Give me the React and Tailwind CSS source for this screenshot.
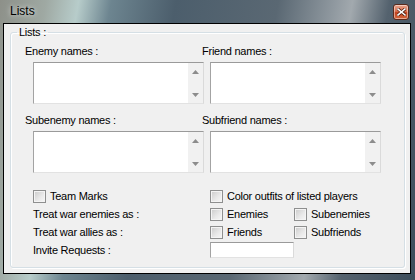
import React from 'react';

const frameBg =
  'bg-[linear-gradient(100deg,#8d9089_0%,#9fa9a3_10%,#b7ccca_17%,#6d8590_24%,#4c5e6c_38%,#5a6873_60%,#8f989f_72%,#a2a9ae_76%,#54626e_84%,#3d4d5b_100%)]';

const Arrow = ({ up }) => (
  <svg width="7" height="4" viewBox="0 0 7 4" aria-hidden="true">
    <path d={up ? 'M3.5 0 L7 4 L0 4 Z' : 'M0 0 L7 0 L3.5 4 Z'} fill="#8c8c8c" />
  </svg>
);

// list box with a disabled vertical scrollbar
const ListBox = () => (
  <div className="ml-[8px] flex h-[42px] w-[171px] border border-t-[#9a9a9a] border-l-[#a3a3a3] border-r-[#dadada] border-b-[#e2e2e2] bg-white">
    <div className="flex-1" />
    <div className="flex w-[16px] flex-col justify-between border-l border-l-white bg-[#f1f1f1]">
      <div className="flex h-[17px] items-center justify-center">
        <Arrow up />
      </div>
      <div className="flex h-[17px] items-center justify-center">
        <Arrow />
      </div>
    </div>
  </div>
);

const Check = ({ label }) => (
  <label className="flex items-center gap-[4px]">
    <span className="h-[13px] w-[13px] border border-[#8e8f8f] bg-[#f4f4f4] p-[1px]">
      <span className="block h-full w-full bg-[linear-gradient(135deg,#cfcfcf,#e9e9e9_60%,#f4f4f4)]" />
    </span>
    <span>{label}</span>
  </label>
);

const CloseButton = () => (
  <button
    type="button"
    className="flex h-[16px] w-[16px] items-center justify-center rounded-[3px] border border-[#5b2a1c] bg-[linear-gradient(180deg,#e9a48c_0%,#d9704f_45%,#c0401c_55%,#d4683e_100%)] shadow-[inset_0_0_0_1px_rgba(255,255,255,0.45)]"
  >
    <svg width="9" height="8" viewBox="0 0 9 8" aria-hidden="true">
      <path
        d="M1 1 L8 7 M8 1 L1 7"
        stroke="#4a1a0c"
        strokeWidth="3"
        strokeLinecap="square"
      />
      <path
        d="M1 1 L8 7 M8 1 L1 7"
        stroke="#ffffff"
        strokeWidth="1.6"
        strokeLinecap="square"
      />
    </svg>
  </button>
);

export default function App() {
  return (
    <div
      className={`flex h-[280px] w-[415px] flex-col ${frameBg} font-['Liberation_Sans',Arial,sans-serif] text-[11px] leading-[13px] tracking-[-0.25px] text-black`}
    >
      {/* Title bar */}
      <div className="flex h-[23px] items-center justify-between pl-[10px] pr-[6px]">
        <span className="text-[12px] tracking-normal [text-shadow:0_0_5px_rgba(255,255,255,0.9)]">Lists</span>
        <CloseButton />
      </div>

      {/* Client area */}
      <div className="ml-[3px] h-[251px] w-[408px] border border-black bg-[#f0f0f0]">
        <fieldset className="ml-[6px] mt-[2px] h-[242px] w-[395px] rounded-[3px] border border-[#d5dfe5] shadow-[inset_1px_1px_0_#fff,1px_1px_0_#fff]">
          <legend className="ml-[6px] px-[2px] leading-[13px]">Lists :</legend>

          <div className="pl-[14px] pt-[6px]">
            <div className="grid grid-cols-[177px_1fr]">
              <div>
                <div className="mb-[4px] h-[13px]">Enemy names :</div>
                <ListBox />
              </div>
              <div>
                <div className="mb-[4px] h-[13px]">Friend names :</div>
                <ListBox />
              </div>
            </div>

            <div className="mt-[10px] grid grid-cols-[177px_1fr]">
              <div>
                <div className="mb-[4px] h-[13px]">Subenemy names :</div>
                <ListBox />
              </div>
              <div>
                <div className="mb-[4px] h-[13px]">Subfriend names :</div>
                <ListBox />
              </div>
            </div>

            <div className="mt-[14px] grid grid-cols-[177px_1fr] auto-rows-[18px] items-center">
              <div className="pl-[8px]">
                <Check label="Team Marks" />
              </div>
              <div className="pl-[8px]">
                <Check label="Color outfits of listed players" />
              </div>

              <div className="pl-[8px]">Treat war enemies as :</div>
              <div className="flex pl-[8px]">
                <div className="w-[84px]">
                  <Check label="Enemies" />
                </div>
                <Check label="Subenemies" />
              </div>

              <div className="pl-[8px]">Treat war allies as :</div>
              <div className="flex pl-[8px]">
                <div className="w-[84px]">
                  <Check label="Friends" />
                </div>
                <Check label="Subfriends" />
              </div>

              <div className="pl-[8px]">Invite Requests :</div>
              <div className="pl-[8px]">
                <input
                  type="text"
                  className="block h-[16px] w-[84px] border border-t-[#9a9a9a] border-l-[#a3a3a3] border-r-[#dadada] border-b-[#e2e2e2] bg-white outline-none"
                />
              </div>
            </div>
          </div>
        </fieldset>
      </div>
    </div>
  );
}
